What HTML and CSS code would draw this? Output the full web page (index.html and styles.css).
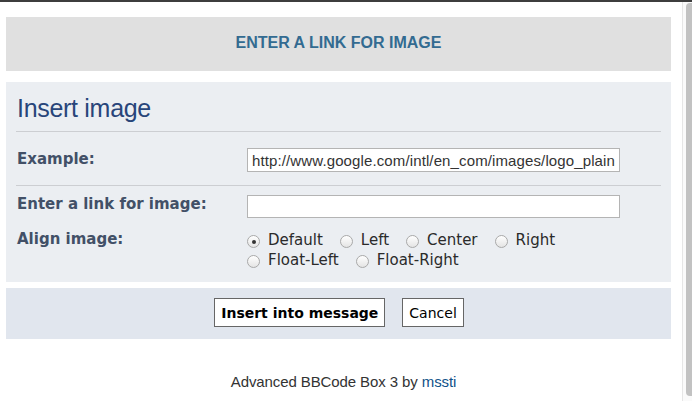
FILE: index.html
```html
<!DOCTYPE html>
<html>
<head>
<meta charset="utf-8">
<link rel="stylesheet" href="styles.css">
</head>
<body>
<div class="window">
  <div class="page">
    <div class="header">ENTER A LINK FOR IMAGE</div>
    <div class="panel">
      <h3 class="title">Insert image</h3>
      <div class="row row-line">
        <div class="label">Example:</div>
        <div class="field"><input class="text" type="text" value="http://www.google.com/intl/en_com/images/logo_plain.gif"></div>
      </div>
      <div class="row row-link">
        <div class="label">Enter a link for image:</div>
        <div class="field"><input class="text" type="text" value=""></div>
      </div>
      <div class="row row-align">
        <div class="label">Align image:</div>
        <div class="field radios">
          <label class="opt"><input type="radio" name="a" class="radio" checked> Default</label>
          <label class="opt"><input type="radio" name="a" class="radio"> Left</label>
          <label class="opt"><input type="radio" name="a" class="radio"> Center</label>
          <label class="opt"><input type="radio" name="a" class="radio"> Right</label>
          <label class="opt"><input type="radio" name="a" class="radio"> Float-Left</label>
          <label class="opt"><input type="radio" name="a" class="radio"> Float-Right</label>
        </div>
      </div>
    </div>
    <div class="actions">
      <button class="btn btn-main">Insert into message</button>
      <button class="btn">Cancel</button>
    </div>
    <div class="footer">Advanced BBCode Box 3 by <a class="link">mssti</a></div>
  </div>
  <div class="scrollbar"><div class="thumb"></div></div>
</div>
</body>
</html>
```
FILE: styles.css
```css
html, body {
  margin: 0;
  padding: 0;
  background: #ffffff;
}
body {
  font-family: "Liberation Sans", Arial, sans-serif;
  border-top: 2px solid #3d3d3d;
  height: 399px;
  overflow: hidden;
}
.window {
  display: flex;
  height: 399px;
}
.page {
  flex: 1;
  padding: 15px 11px 0 6px;
}
.header {
  height: 54px;
  box-sizing: border-box;
  padding-bottom: 3px;
  background: #e0e0e0;
  color: #336b91;
  font-weight: bold;
  font-size: 16px;
  display: flex;
  align-items: center;
  justify-content: center;
  letter-spacing: 0;
}
.panel {
  margin-top: 11px;
  height: 200px;
  box-sizing: border-box;
  background: #ebeef2;
  padding: 11px 10px 0 10px;
}
.title {
  margin: 0;
  font-weight: normal;
  font-size: 25px;
  color: #28457a;
  padding: 0 0 8px 1px;
  border-bottom: 1px solid #ccced2;
  line-height: 30px;
  letter-spacing: -0.3px;
}
.row {
  display: flex;
  align-items: flex-start;
}
.label {
  width: 230px;
  padding-left: 1px;
  font-family: "DejaVu Sans", Verdana, sans-serif;
  font-weight: bold;
  font-size: 15px;
  color: #425067;
}
.row-line {
  padding: 16px 0 13px 0;
  border-bottom: 1px solid #ccced2;
}
.row-line .label { padding-top: 2px; }
.row-link {
  padding-top: 9px;
}
.row-link .label { padding-top: 0; }
.row-align {
  padding-top: 12px;
}
.row-align .label { padding-top: 0; }
.text {
  width: 373px;
  height: 24px;
  box-sizing: border-box;
  border: 1px solid #b4b4b4;
  background: #fff;
  font-family: "Liberation Sans", Arial, sans-serif;
  font-size: 15px;
  letter-spacing: 0.12px;
  color: #333;
  padding: 0 4px;
  margin: 0;
  outline: none;
}
.row-link .text { height: 23px; }
.radios {
  width: 340px;
  display: flex;
  flex-wrap: wrap;
  column-gap: 17px;
  font-family: "DejaVu Sans", Verdana, sans-serif;
  font-size: 15px;
  color: #2a2a2a;
  line-height: 20px;
}
.opt {
  display: flex;
  align-items: center;
  gap: 8px;
}
.radio {
  -webkit-appearance: none;
  appearance: none;
  width: 13px;
  height: 13px;
  margin: 3px 0 0 0;
  border-radius: 50%;
  border: 1px solid #a9a9a9;
  background: linear-gradient(#ffffff, #e4e4e4);
  box-sizing: border-box;
  position: relative;
}
.radio:checked::after {
  content: "";
  position: absolute;
  left: 3.5px;
  top: 3.5px;
  width: 4px;
  height: 4px;
  border-radius: 50%;
  background: #333;
}
.actions {
  margin-top: 6px;
  height: 51px;
  box-sizing: border-box;
  padding-bottom: 2px;
  background: #e1e6ee;
  display: flex;
  justify-content: center;
  align-items: center;
  gap: 17px;
  padding-left: 1px;
}
.btn {
  font-family: "DejaVu Sans", Verdana, sans-serif;
  font-size: 14px;
  color: #000;
  background: #fff;
  border: 1px solid #666;
  height: 29px;
  padding: 0 6px;
  margin: 0;
}
.btn-main { font-weight: bold; }
.footer {
  text-align: center;
  margin-top: 34px;
  font-size: 15px;
  color: #333;
  padding-left: 10px;
  letter-spacing: -0.1px;
}
.link {
  color: #105289;
}
.scrollbar {
  width: 10px;
  border-left: 1px solid #e6e6e6;
  background: #fafafa;
  padding: 1px 0 5px 3px;
  box-sizing: border-box;
  display: flex;
}
.thumb {
  flex: 1;
  background: #c2c2c2;
  border-radius: 4px 0 0 4px;
}
```
